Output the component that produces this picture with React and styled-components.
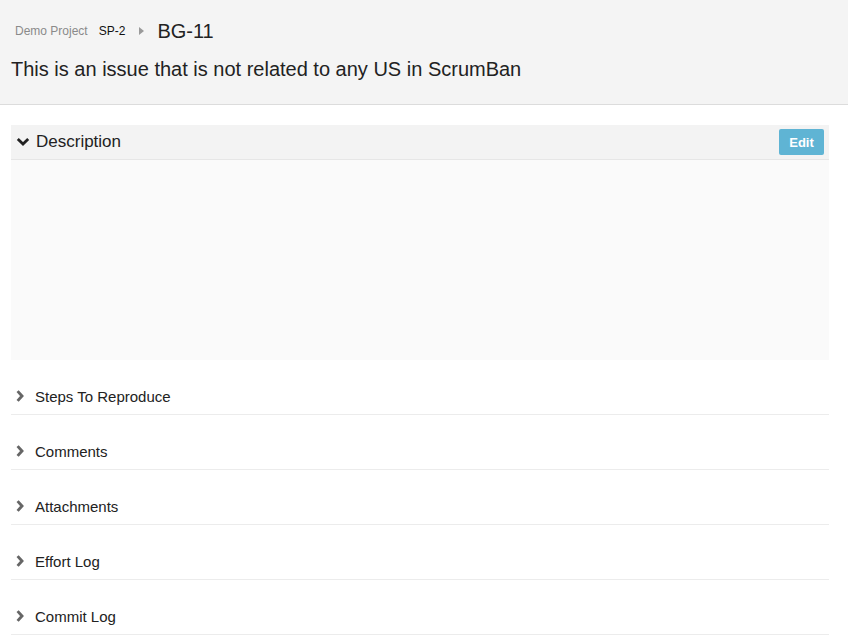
import React from "react";
import styled, { createGlobalStyle } from "styled-components";

const Global = createGlobalStyle`
  html, body { margin: 0; padding: 0; background: #fff; }
  body { font-family: "Liberation Sans", Arial, sans-serif; color: #333; }
`;

const Header = styled.header`
  background: #f4f4f4;
  border-bottom: 1px solid #dcdcdc;
  height: 105px;
  box-sizing: border-box;
  padding: 18px 11px 0;
`;

const Crumbs = styled.div`
  display: flex;
  align-items: center;
  height: 26px;
  padding-left: 4px;
`;

const Crumb = styled.span`
  font-size: 12px;
  color: ${(p) => (p.$muted ? "#8a8a8a" : "#111")};
  margin-right: ${(p) => p.$gap || 0}px;
`;

const Caret = styled.span`
  width: 0;
  height: 0;
  border-top: 4px solid transparent;
  border-bottom: 4px solid transparent;
  border-left: 5px solid #9a9a9a;
  margin: 0 13px 0 14px;
`;

const Key = styled.span`
  font-size: 20px;
  color: #222;
`;

const Title = styled.h1`
  margin: 14px 0 0;
  font-size: 20px;
  font-weight: normal;
  color: #222;
`;

const Main = styled.main`
  padding: 20px 19px 0 11px;
`;

const Panel = styled.section`
  background: #fafafa;
`;

const PanelHead = styled.div`
  display: flex;
  align-items: center;
  height: 35px;
  box-sizing: border-box;
  background: #f3f3f3;
  border-bottom: 1px solid #e6e6e6;
  padding: 0 5px 0 5px;
`;

const PanelTitle = styled.span`
  font-size: 17px;
  color: #222;
  flex: 1;
  margin-left: 6px;
`;

const EditButton = styled.button`
  font-family: inherit;
  font-size: 13px;
  font-weight: bold;
  color: #fff;
  background: #5fb4d4;
  border: none;
  border-radius: 2px;
  width: 45px;
  height: 26px;
  padding: 0;
`;

const PanelBody = styled.div`
  height: 200px;
`;

const Row = styled.div`
  display: flex;
  align-items: flex-end;
  height: 55px;
  box-sizing: border-box;
  padding: 0 0 9px 5px;
  border-bottom: 1px solid #ececec;
`;

const RowTitle = styled.span`
  font-size: 15px;
  color: #222;
  margin-left: 11px;
`;

const IconWrap = styled.span`
  display: flex;
  align-items: center;
  margin-bottom: ${(p) => p.$mb || 0}px;
`;

const ChevronDown = () => (
  <svg width="14" height="10" viewBox="0 0 14 10">
    <path d="M1.8 2 L7 7 L12.2 2" fill="none" stroke="#222" strokeWidth="2.8" />
  </svg>
);

const ChevronRight = () => (
  <svg width="8" height="12" viewBox="0 0 8 12">
    <path d="M1.6 1.1 L6 6 L1.6 10.9" fill="none" stroke="#666" strokeWidth="2.9" />
  </svg>
);

const sections = ["Steps To Reproduce", "Comments", "Attachments", "Effort Log", "Commit Log"];

export default function App() {
  return (
    <>
      <Global />
      <Header>
        <Crumbs>
          <Crumb $muted $gap={11}>Demo Project</Crumb>
          <Crumb>SP-2</Crumb>
          <Caret />
          <Key>BG-11</Key>
        </Crumbs>
        <Title>This is an issue that is not related to any US in ScrumBan</Title>
      </Header>
      <Main>
        <Panel>
          <PanelHead>
            <ChevronDown />
            <PanelTitle>Description</PanelTitle>
            <EditButton>Edit</EditButton>
          </PanelHead>
          <PanelBody />
        </Panel>
        {sections.map((s) => (
          <Row key={s}>
            <IconWrap $mb={3}>
              <ChevronRight />
            </IconWrap>
            <RowTitle>{s}</RowTitle>
          </Row>
        ))}
      </Main>
    </>
  );
}
